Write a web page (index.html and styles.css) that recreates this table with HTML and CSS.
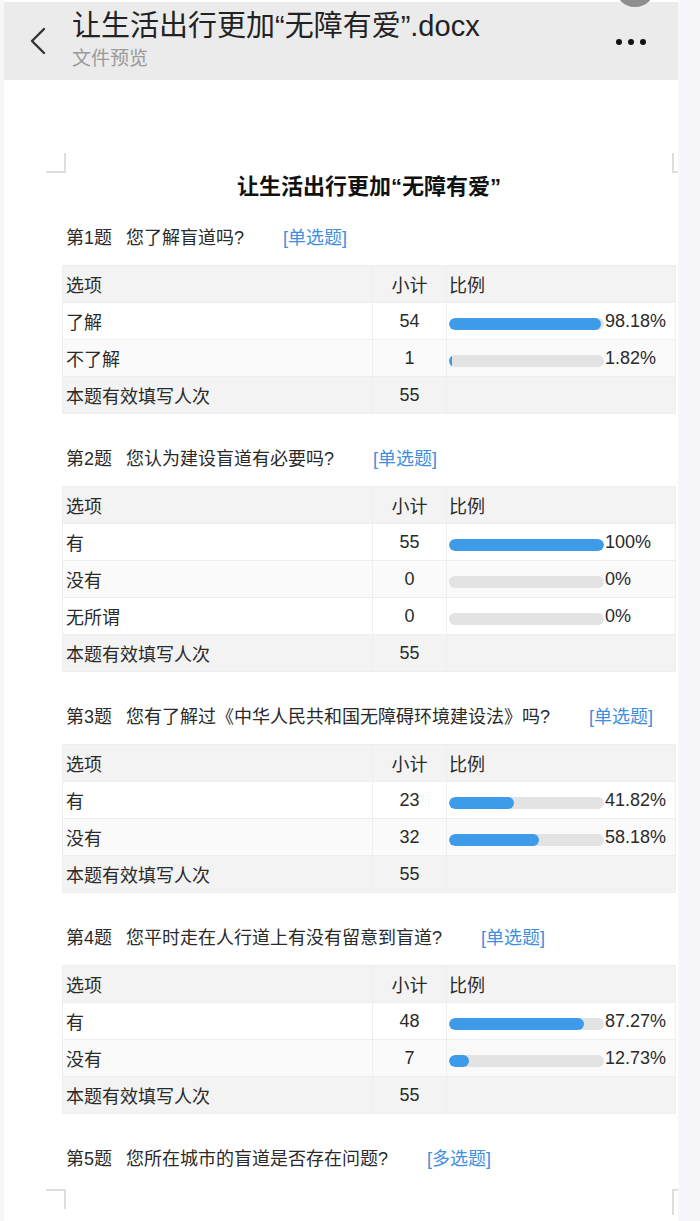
FILE: index.html
```html
<!DOCTYPE html>
<html lang="zh-CN">
<head>
    <meta charset="UTF-8">
    <meta name="viewport" content="width=device-width, initial-scale=1.0">
    <title>文件预览</title>
    <link rel="stylesheet" href="styles.css">
</head>
<body>
    <div class="screen">
        <div class="avatar"></div>

        <header class="topbar">
            <div class="back">
                <svg width="18" height="28" viewBox="0 0 18 28">
                    <path d="M16 2 L4 14 L16 26" fill="none" stroke="#333" stroke-width="2.4" stroke-linecap="round" stroke-linejoin="round"/>
                </svg>
            </div>
            <div class="file-info">
                <div class="file-name">让生活出行更加“无障有爱”.docx</div>
                <div class="file-sub">文件预览</div>
            </div>
            <div class="more"><span></span><span></span><span></span></div>
        </header>

        <div class="doc">
            <div class="page">
                <span class="corner tl"></span>
                <span class="corner tr"></span>
                <span class="corner bl"></span>
                <span class="corner br"></span>

                <h1 class="doc-title">让生活出行更加“无障有爱”</h1>

                <div class="section">
                    <div class="question">
                        <span class="q-no">第1题</span>
                        <span class="q-text">您了解盲道吗?</span>
                        <span class="q-type">[单选题]</span>
                    </div>
                    <table class="stats">
                        <tr class="head"><td>选项</td><td class="num">小计</td><td>比例</td></tr>
                        <tr><td>了解</td><td class="num">54</td><td><div class="ratio"><div class="bar"><div class="fill" style="width: 98.18%"></div></div><span>98.18%</span></div></td></tr>
                        <tr><td>不了解</td><td class="num">1</td><td><div class="ratio"><div class="bar"><div class="fill" style="width: 1.82%"></div></div><span>1.82%</span></div></td></tr>
                        <tr class="total"><td>本题有效填写人次</td><td class="num">55</td><td></td></tr>
                    </table>
                </div>

                <div class="section">
                    <div class="question">
                        <span class="q-no">第2题</span>
                        <span class="q-text">您认为建设盲道有必要吗?</span>
                        <span class="q-type">[单选题]</span>
                    </div>
                    <table class="stats">
                        <tr class="head"><td>选项</td><td class="num">小计</td><td>比例</td></tr>
                        <tr><td>有</td><td class="num">55</td><td><div class="ratio"><div class="bar"><div class="fill" style="width: 100%"></div></div><span>100%</span></div></td></tr>
                        <tr><td>没有</td><td class="num">0</td><td><div class="ratio"><div class="bar"><div class="fill" style="width: 0%"></div></div><span>0%</span></div></td></tr>
                        <tr><td>无所谓</td><td class="num">0</td><td><div class="ratio"><div class="bar"><div class="fill" style="width: 0%"></div></div><span>0%</span></div></td></tr>
                        <tr class="total"><td>本题有效填写人次</td><td class="num">55</td><td></td></tr>
                    </table>
                </div>

                <div class="section">
                    <div class="question">
                        <span class="q-no">第3题</span>
                        <span class="q-text">您有了解过《中华人民共和国无障碍环境建设法》吗?</span>
                        <span class="q-type">[单选题]</span>
                    </div>
                    <table class="stats">
                        <tr class="head"><td>选项</td><td class="num">小计</td><td>比例</td></tr>
                        <tr><td>有</td><td class="num">23</td><td><div class="ratio"><div class="bar"><div class="fill" style="width: 41.82%"></div></div><span>41.82%</span></div></td></tr>
                        <tr><td>没有</td><td class="num">32</td><td><div class="ratio"><div class="bar"><div class="fill" style="width: 58.18%"></div></div><span>58.18%</span></div></td></tr>
                        <tr class="total"><td>本题有效填写人次</td><td class="num">55</td><td></td></tr>
                    </table>
                </div>

                <div class="section">
                    <div class="question">
                        <span class="q-no">第4题</span>
                        <span class="q-text">您平时走在人行道上有没有留意到盲道?</span>
                        <span class="q-type">[单选题]</span>
                    </div>
                    <table class="stats">
                        <tr class="head"><td>选项</td><td class="num">小计</td><td>比例</td></tr>
                        <tr><td>有</td><td class="num">48</td><td><div class="ratio"><div class="bar"><div class="fill" style="width: 87.27%"></div></div><span>87.27%</span></div></td></tr>
                        <tr><td>没有</td><td class="num">7</td><td><div class="ratio"><div class="bar"><div class="fill" style="width: 12.73%"></div></div><span>12.73%</span></div></td></tr>
                        <tr class="total"><td>本题有效填写人次</td><td class="num">55</td><td></td></tr>
                    </table>
                </div>

                <div class="section">
                    <div class="question">
                        <span class="q-no">第5题</span>
                        <span class="q-text">您所在城市的盲道是否存在问题?</span>
                        <span class="q-type">[多选题]</span>
                    </div>
                </div>
            </div>
        </div>
    </div>
</body>
</html>
```

FILE: styles.css
```css
* {
    margin: 0;
    padding: 0;
    box-sizing: border-box;
}

body {
    background: #f7f7fb;
    font-family: "Liberation Sans", "Noto Sans CJK SC", sans-serif;
    color: #333;
    overflow: hidden;
}

.screen {
    position: relative;
    width: 674px;
    height: 1221px;
    margin-left: 4px;
    padding-top: 2px;
    background: #fff;
}

/* grey circle peeking in at the top edge */
.avatar {
    position: absolute;
    top: -33px;
    right: 23px;
    width: 40px;
    height: 40px;
    border-radius: 50%;
    background: #8e8e8e;
}

.topbar {
    height: 78px;
    background: #ebebeb;
    display: flex;
    align-items: flex-start;
    padding: 0 32px 0 24px;
}

.back {
    margin-top: 25px;
    margin-right: 26px;
    height: 28px;
}

.file-info {
    flex: 1;
    padding-top: 8px;
}

.file-name {
    height: 32px;
    font-size: 29px;
    line-height: 32px;
    color: #222;
    white-space: nowrap;
}

.file-sub {
    margin-top: 5px;
    height: 24px;
    font-size: 19px;
    line-height: 24px;
    color: #9a9a9a;
}

.more {
    display: flex;
    gap: 6px;
    margin-top: 37px;
}

.more span {
    width: 6px;
    height: 6px;
    border-radius: 50%;
    background: #111;
}

.doc {
    padding: 73px 0 0 42px;
}

.page {
    position: relative;
    padding: 20px 6px 18px 20px;
}

.corner {
    position: absolute;
    width: 20px;
    height: 20px;
    border: 0 solid #dedede;
}

.corner.tl {
    top: 0;
    left: 0;
    border-right-width: 2px;
    border-bottom-width: 2px;
}

.corner.tr {
    top: 0;
    right: 0;
    width: 6px;
    border-left-width: 2px;
    border-bottom-width: 2px;
}

.corner.bl {
    top: 100%;
    left: 0;
    border-right-width: 2px;
    border-top-width: 2px;
}

.corner.br {
    top: 100%;
    right: 0;
    width: 6px;
    height: 26px;
    border-left-width: 2px;
    border-top-width: 2px;
}

.doc-title {
    height: 28px;
    font-size: 22px;
    line-height: 28px;
    font-weight: bold;
    text-align: center;
    color: #111;
    margin-bottom: 25px;
}

.section + .section {
    margin-top: 33px;
}

.question {
    display: flex;
    height: 24px;
    font-size: 18px;
    line-height: 24px;
    color: #2a2a2a;
}

.q-text {
    margin-left: 14px;
}

.q-type {
    margin-left: 39px;
    color: #3f8fe0;
}

.stats {
    width: 614px;
    margin: 15px 0 0 -4px;
    border-collapse: collapse;
    font-size: 18px;
    color: #2a2a2a;
}

.stats td {
    height: 37px;
    padding: 0 3px;
    border: 1px solid #eeeeee;
    vertical-align: middle;
}

.stats td:nth-child(1) {
    width: 310px;
}

.stats td:nth-child(2) {
    width: 74px;
}

.stats td:nth-child(3) {
    padding-left: 2px;
}

.stats .num {
    text-align: center;
}

.stats tr:nth-child(odd) {
    background: #fafafa;
}

.stats tr.head,
.stats tr.total {
    background: #f3f3f3;
}

.ratio {
    display: flex;
    align-items: center;
}

.bar {
    width: 155px;
    height: 12px;
    margin-top: 5px;
    border-radius: 6px;
    background: #e3e3e3;
    overflow: hidden;
}

.fill {
    height: 100%;
    border-radius: 6px;
    background: #3d9be9;
}

.ratio span {
    margin-left: 1px;
}
```
